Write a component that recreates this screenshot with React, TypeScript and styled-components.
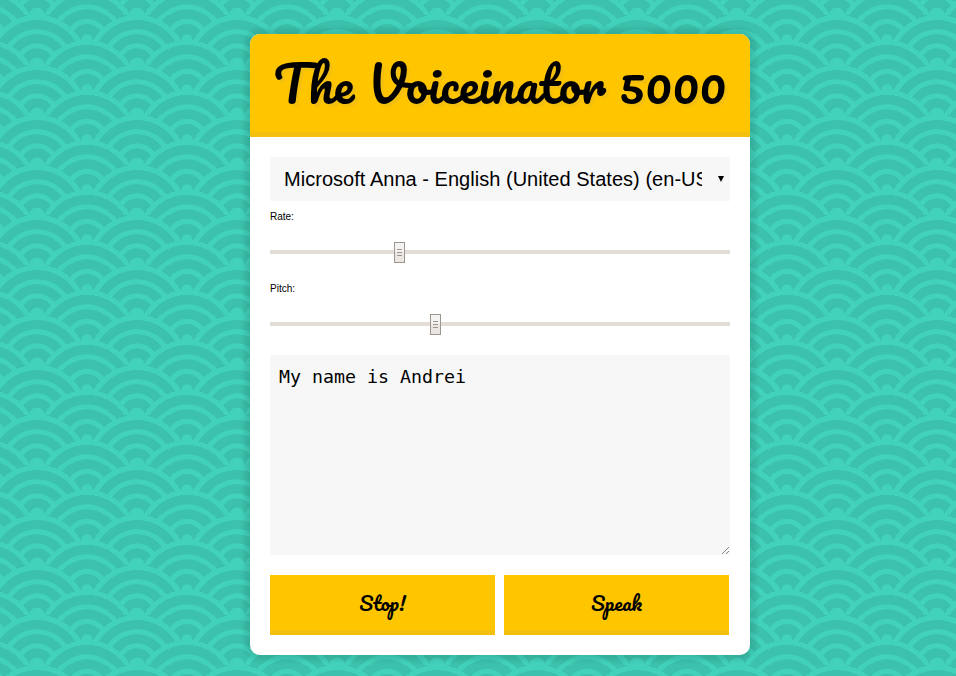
import React, { useState } from 'react';
import styled, { createGlobalStyle, css } from 'styled-components';

const TEAL = '#3bc1ac';
const MINT = '#42d2bb';
const YELLOW = '#ffc600';
const GOLD = '#f3c010';

const lowerWave = `${TEAL} 24%, ${MINT} 25%, ${MINT} 28%, ${TEAL} 29%, ${TEAL} 36%, ${MINT} 36%, ${MINT} 40%, transparent 40%, transparent`;
const midWave = `${MINT} 10%, ${TEAL} 11%, ${TEAL} 23%, ${MINT} 24%, ${MINT} 30%, ${TEAL} 31%, ${TEAL} 43%, ${MINT} 44%, ${MINT} 50%, ${TEAL} 51%, ${TEAL} 63%, ${MINT} 64%, ${MINT} 71%, transparent 71%, transparent`;
const sideWave = `${MINT} 5%, ${TEAL} 6%, ${TEAL} 15%, ${MINT} 16%, ${MINT} 20%, ${TEAL} 21%, ${TEAL} 30%, ${MINT} 31%, ${MINT} 35%, ${TEAL} 36%, ${TEAL} 45%, ${MINT} 46%, ${MINT} 49%, transparent 50%, transparent`;

const GlobalStyle = createGlobalStyle`
  *, *::before, *::after { box-sizing: border-box; }
  body {
    margin: 0;
    font: 10px "Liberation Sans", Arial, sans-serif;
    color: #000;
    overflow: hidden;
  }
`;

const Page = styled.main`
  display: flex;
  align-items: flex-start;
  justify-content: center;
  height: 676px;
  padding: 34px 0 0 44px;
  background-color: ${TEAL};
  background-image:
    radial-gradient(circle at 100% 150%, ${lowerWave}),
    radial-gradient(circle at 0 150%, ${lowerWave}),
    radial-gradient(circle at 50% 100%, ${midWave}),
    radial-gradient(circle at 100% 50%, ${sideWave}),
    radial-gradient(circle at 0 50%, ${sideWave});
  background-size: 100px 50px;
  background-position: -13px 15px;
`;

const Card = styled.section`
  width: 500px;
  height: 621px;
  border-radius: 10px;
  overflow: hidden;
  background: #fff;
  box-shadow: 0 0 5px 5px rgba(0, 0, 0, 0.1);
`;

const script = css`
  font-family: Pacifico, cursive;
  font-weight: 400;
`;

const Header = styled.header`
  height: 103px;
  background: ${YELLOW};
  border-bottom: 5px solid ${GOLD};
`;

const Title = styled.h1`
  ${script}
  margin: 0;
  height: 98px;
  display: flex;
  align-items: center;
  justify-content: center;
  font-size: 50px;
  line-height: 98px;
  white-space: nowrap;
  text-shadow: 3px 3px 0 ${GOLD};
`;

const Body = styled.div`
  padding: 20px;
`;

const VoiceSelect = styled.div`
  display: flex;
  align-items: center;
  justify-content: space-between;
  height: 44px;
  padding: 0 6px 0 14px;
  background: #f7f7f7;
`;

const VoiceName = styled.span`
  width: 418px;
  overflow: hidden;
  white-space: nowrap;
  font-size: 20px;
  line-height: 30px;
  letter-spacing: 0.03px;
`;

const Field = styled.label`
  display: block;
  height: 72px;
  padding-top: 10px;
  line-height: 12px;
`;

const Range = styled.input`
  appearance: none;
  display: block;
  width: 460px;
  height: 21px;
  margin: 19px 0 0;
  background: linear-gradient(#e2ddd7, #e2ddd7) 0 8px / 100% 4px no-repeat;

  &::-webkit-slider-thumb {
    appearance: none;
    width: 11px;
    height: 21px;
    border: 1px solid #9d968e;
    background:
      linear-gradient(#9d968e, #9d968e) 2px 6px / 5px 1px no-repeat,
      linear-gradient(#9d968e, #9d968e) 2px 9px / 5px 1px no-repeat,
      linear-gradient(#9d968e, #9d968e) 2px 12px / 5px 1px no-repeat,
      linear-gradient(#f5f3f1 50%, #ebe6e2 50%);
  }
`;

const MessageBox = styled.div`
  position: relative;
  height: 200px;
  margin: 10px 0 20px;
`;

const Message = styled.textarea`
  display: block;
  width: 100%;
  height: 100%;
  border: 0;
  padding: 10px 9px;
  resize: none;
  background: #f7f7f7;
  color: #000;
  outline: 0;
  font: 18.27px/23px "DejaVu Sans Mono", monospace;
`;

const Grip = styled.svg`
  position: absolute;
  right: 0;
  bottom: 0;
`;

const Actions = styled.div`
  display: flex;
  gap: 9px;
`;

const Action = styled.button`
  ${script}
  width: 225px;
  height: 60px;
  border: 0;
  border-bottom: 5px solid ${GOLD};
  padding: 0;
  background: ${YELLOW};
  color: #000;
  font-size: 20px;
`;

export default function App() {
  const [rate, setRate] = useState(124);
  const [pitch, setPitch] = useState(160);
  const [message, setMessage] = useState('My name is Andrei');

  return (
    <>
      <GlobalStyle />
      <Page>
        <Card>
          <Header>
            <Title>The Voiceinator 5000</Title>
          </Header>
          <Body>
            <VoiceSelect>
              <VoiceName>Microsoft Anna - English (United States) (en-US)</VoiceName>
              <svg width="6" height="6" viewBox="0 0 6 6">
                <path d="M0 0h6L3 6z" />
              </svg>
            </VoiceSelect>
            <Field>
              Rate:
              <Range type="range" min={0} max={449} value={rate} onChange={(e) => setRate(+e.target.value)} />
            </Field>
            <Field>
              Pitch:
              <Range type="range" min={0} max={449} value={pitch} onChange={(e) => setPitch(+e.target.value)} />
            </Field>
            <MessageBox>
              <Message spellCheck={false} value={message} onChange={(e) => setMessage(e.target.value)} />
              <Grip width="9" height="9" viewBox="0 0 9 9" stroke="#555" strokeWidth="1" strokeDasharray="1 .5">
                <path d="M1 8L8 1M5 8l3-3" fill="none" />
              </Grip>
            </MessageBox>
            <Actions>
              <Action>Stop!</Action>
              <Action>Speak</Action>
            </Actions>
          </Body>
        </Card>
      </Page>
    </>
  );
}
